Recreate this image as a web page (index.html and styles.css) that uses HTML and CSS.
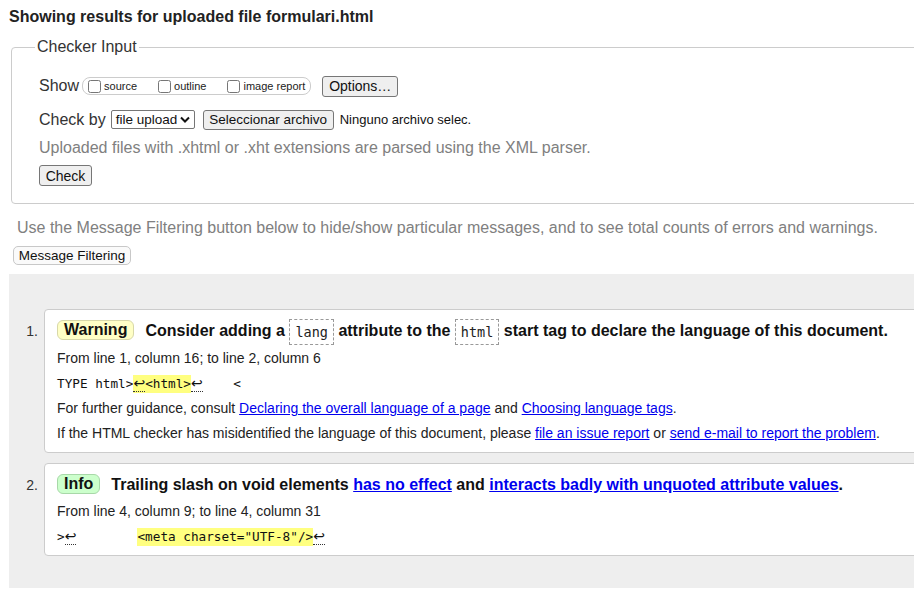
FILE: index.html
```html
<!DOCTYPE html>
<html lang="en">
<head>
<meta charset="utf-8">
<title>Nu Html Checker</title>
<link rel="stylesheet" href="styles.css">
</head>
<body>
<div class="page">
  <h2 class="heading">Showing results for uploaded file formulari.html</h2>

  <fieldset class="checker">
    <legend class="legend">Checker Input</legend>
    <div class="row row-show">
      <span class="label">Show</span>
      <span class="opts">
        <label class="opt"><input type="checkbox" class="cb"><span>source</span></label>
        <label class="opt"><input type="checkbox" class="cb"><span>outline</span></label>
        <label class="opt"><input type="checkbox" class="cb"><span>image report</span></label>
      </span>
      <button class="btn btn-options" type="button">Options…</button>
    </div>
    <div class="row row-check">
      <span class="label">Check by</span>
      <span class="select">file upload<svg class="chev" width="10" height="7" viewBox="0 0 10 7"><path d="M1 1.5 L5 5.5 L9 1.5" fill="none" stroke="#111" stroke-width="2"/></svg></span>
      <button class="btn btn-file" type="button">Seleccionar archivo</button>
      <span class="nofile">Ninguno archivo selec.</span>
    </div>
    <p class="hint">Uploaded files with .xhtml or .xht extensions are parsed using the XML parser.</p>
    <div class="row row-submit">
      <button class="btn btn-check" type="button">Check</button>
    </div>
  </fieldset>

  <p class="filter-note">Use the Message Filtering button below to hide/show particular messages, and to see total counts of errors and warnings.</p>
  <button class="btn-filter" type="button">Message Filtering</button>

  <div class="results">
    <ol class="messages">
      <li class="msg">
        <span class="num">1.</span>
        <div class="card">
          <p class="title"><span class="badge badge-warning">Warning</span><span>Consider adding a <code class="tag">lang</code> attribute to the <code class="tag">html</code> start tag to declare the language of this document.</span></p>
          <p class="loc">From line 1, column 16; to line 2, column 6</p>
          <p class="extract"><code>TYPE html&gt;<mark class="hl"><b class="lf">↩</b>&lt;html&gt;</mark><b class="lf">↩</b>    &lt;</code></p>
          <p class="line">For further guidance, consult <a href="#">Declaring the overall language of a page</a> and <a href="#">Choosing language tags</a>.</p>
          <p class="line">If the HTML checker has misidentified the language of this document, please <a href="#">file an issue report</a> or <a href="#">send e-mail to report the problem</a>.</p>
        </div>
      </li>
      <li class="msg">
        <span class="num">2.</span>
        <div class="card">
          <p class="title"><span class="badge badge-info">Info</span><span>Trailing slash on void elements <a href="#">has no effect</a> and <a href="#">interacts badly with unquoted attribute values</a>.</span></p>
          <p class="loc">From line 4, column 9; to line 4, column 31</p>
          <p class="extract"><code>&gt;<b class="lf">↩</b>        <mark class="hl">&lt;meta charset="UTF-8"/&gt;</mark><b class="lf">↩</b></code></p>
        </div>
      </li>
    </ol>
  </div>
</div>
</body>
</html>
```
FILE: styles.css
```css
html {
  overflow: hidden;
}
body {
  margin: 0;
  font-family: "Liberation Sans", Arial, sans-serif;
  color: #222;
  background: #fff;
}
.page {
  width: 960px;
}
.heading {
  margin: 8px 0 0 9px;
  font-size: 16px;
  line-height: 18px;
  font-weight: bold;
  color: #222;
}
.checker {
  margin: 12px 0 0 11px;
  padding: 0 0 17px 27px;
  border: 1px solid #ccc;
  border-radius: 4px;
  min-width: 0;
}
.legend {
  margin-left: -4px;
  padding: 0 2px;
  font-size: 16px;
  line-height: 18px;
  color: #333;
}
.row {
  display: flex;
  align-items: center;
  white-space: nowrap;
}
.row-show {
  margin-top: 19px;
  height: 22px;
}
.row-check {
  margin-top: 12px;
  height: 21px;
}
.row-submit {
  margin-top: 8px;
  height: 21px;
}
.label {
  font-size: 16px;
  color: #333;
  margin-right: 3px;
}
.opts {
  display: inline-flex;
  align-items: center;
  height: 16px;
  border: 1px solid #ccc;
  border-radius: 8px;
  padding: 0 5px 0 3px;
}
.opt {
  display: inline-flex;
  align-items: center;
  font-size: 11px;
  color: #222;
  margin-right: 19px;
}
.opt:last-child {
  margin-right: 0;
}
.cb {
  width: 13px;
  height: 13px;
  margin: 0 3px 0 2px;
}
.btn {
  font-family: "Liberation Sans", Arial, sans-serif;
  background: #efefef;
  border: 1px solid #767676;
  border-radius: 3px;
  color: #111;
  height: 21px;
  padding: 0 7px;
  white-space: nowrap;
}
.btn-options {
  margin-left: 11px;
  font-size: 14px;
  width: 76px;
  padding: 0;
}
.select {
  display: inline-flex;
  align-items: center;
  justify-content: space-between;
  box-sizing: border-box;
  width: 84px;
  height: 19px;
  padding: 0 4px 0 4px;
  border: 1px solid #767676;
  border-radius: 2px;
  font-size: 13.5px;
  color: #111;
  margin-left: 2px;
  white-space: nowrap;
}
.chev {
  margin-left: 3px;
  flex: none;
}
.btn-file {
  margin-left: 8px;
  font-size: 13.5px;
  width: 131px;
  height: 20px;
  padding: 0;
}
.nofile {
  margin-left: 6px;
  font-size: 13px;
  color: #111;
}
.hint {
  margin: 9px 0 0;
  font-size: 16px;
  line-height: 18px;
  color: #808080;
}
.btn-check {
  font-size: 14px;
  width: 53px;
  padding: 0;
}
.filter-note {
  margin: 15px 0 0 17px;
  font-size: 16px;
  line-height: 18px;
  color: #808080;
}
.btn-filter {
  display: block;
  margin: 9px 0 0 13px;
  height: 19px;
  width: 118px;
  padding: 0;
  font-family: "Liberation Sans", Arial, sans-serif;
  font-size: 13.5px;
  color: #111;
  background: #fafafa;
  border: 1px solid #c8c8c8;
  border-radius: 5px;
}
.results {
  margin: 9px 0 0 9px;
  background: #eee;
  padding: 35px 0 32px;
}
.messages {
  list-style: none;
  margin: 0;
  padding: 0;
  display: flex;
  flex-direction: column;
  gap: 10px;
}
.msg {
  display: flex;
  align-items: flex-start;
}
.num {
  width: 35px;
  box-sizing: border-box;
  padding-right: 6px;
  text-align: right;
  margin-top: 9px;
  line-height: 26px;
  font-size: 14px;
  color: #333;
}
.card {
  flex: 1;
  background: #fff;
  border: 1px solid #ccc;
  border-radius: 4px;
  padding: 0 0 10px 12px;
}
.card p {
  margin: 8px 0 0;
  font-size: 14px;
  line-height: 17px;
}
.card p.title {
  margin-top: 8px;
  font-size: 16px;
  line-height: 26px;
  font-weight: bold;
  color: #111;
}
.card p.loc {
  margin-top: 5px;
}
.badge {
  display: inline-block;
  line-height: 18px;
  padding: 0 6px;
  border: 1px solid #ccc;
  border-radius: 6px;
  margin-right: 11px;
  vertical-align: 1px;
}
.badge-warning {
  background: #ffffc6;
  border-color: #d8d8a8;
}
.badge-info {
  background: #ccffcc;
  border-color: #a8d8a8;
}
.tag {
  display: inline-block;
  font-family: "DejaVu Sans Mono", "Liberation Mono", monospace;
  font-weight: normal;
  font-size: 13.5px;
  line-height: 20px;
  padding: 2px 5px;
  border: 1px dashed #999;
  vertical-align: middle;
  color: #222;
}
.extract code {
  font-family: "DejaVu Sans Mono", "Liberation Mono", monospace;
  font-size: 12.7px;
  white-space: pre;
  color: #111;
}
.hl {
  background: #ffff80;
  color: #111;
  padding: 1px 0 2px;
}
.lf {
  font-family: "DejaVu Sans", sans-serif;
  font-size: 14px;
  font-weight: normal;
  border-bottom: 1px dotted #333;
}
a {
  color: #00e;
  text-decoration: underline;
}
```
